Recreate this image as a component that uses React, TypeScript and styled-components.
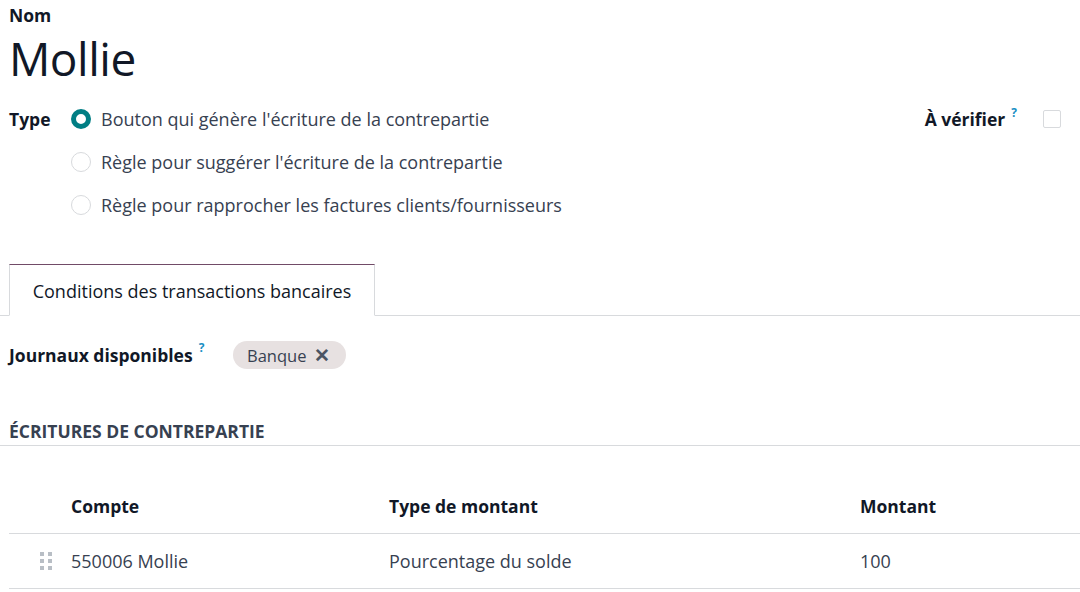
import React from "react";
import styled, { createGlobalStyle } from "styled-components";

const Global = createGlobalStyle`
  html, body { margin: 0; padding: 0; background: #fff; }
  body { font-family: "Open Sans", "Noto Sans", sans-serif; color: #374151; }
  * { box-sizing: border-box; }
`;

const Page = styled.div`
  width: 1080px;
  height: 592px;
  overflow: hidden;
  display: flex;
  flex-direction: column;
`;

const Padded = styled.div`
  padding: 0 19px 0 9px;
`;

const FieldLabel = styled.div`
  font-weight: 700;
  font-size: 17.5px;
  color: #111827;
  line-height: 22px;
  white-space: nowrap;
`;

const NameBlock = styled(Padded)`
  padding-top: 4px;
`;

const Title = styled.h1`
  margin: 2px 0 0 0;
  font-weight: 400;
  font-size: 46px;
  line-height: 60px;
  color: #111827;
  letter-spacing: -0.5px;
`;

const TypeRow = styled(Padded)`
  display: flex;
  align-items: flex-start;
  margin-top: 15px;
`;

const TypeLabel = styled(FieldLabel)`
  width: 62px;
  line-height: 32px;
`;

const RadioList = styled.div`
  display: flex;
  flex-direction: column;
  gap: 11px;
  flex: 1;
`;

const RadioItem = styled.label`
  display: flex;
  align-items: center;
  gap: 10px;
  height: 32px;
  font-size: 18px;
  color: #374151;
`;

const RadioDot = styled.span<{ $checked?: boolean }>`
  width: 20px;
  height: 20px;
  border-radius: 50%;
  flex-shrink: 0;
  border: ${(p) => (p.$checked ? "5px solid #017e84" : "1px solid #d8dadd")};
  background: #fff;
`;

const VerifyBox = styled.div`
  display: flex;
  align-items: center;
  height: 32px;
`;

const Help = styled.sup`
  color: #1a8fc4;
  font-weight: 700;
  font-size: 12px;
  margin-left: 6px;
  position: relative;
  top: -7px;
`;

const Checkbox = styled.span`
  width: 18px;
  height: 18px;
  border: 1px solid #d8dadd;
  border-radius: 2px;
  margin-left: 26px;
  background: #fff;
`;

const Tabs = styled.div`
  display: flex;
  margin-top: 43px;
  padding-left: 9px;
  border-bottom: 1px solid #d8dadd;
`;

const Tab = styled.div`
  width: 366px;
  height: 52px;
  margin-bottom: -1px;
  border: 1px solid #d8dadd;
  border-top: 1px solid #714b67;
  border-bottom: 1px solid #fff;
  background: #fff;
  display: flex;
  align-items: center;
  justify-content: center;
  font-size: 18px;
  color: #111827;
  padding-top: 2px;
`;

const JournalRow = styled(Padded)`
  display: flex;
  align-items: center;
  margin-top: 24px;
  height: 30px;
`;

const JournalLabel = styled(FieldLabel)`
  display: flex;
  align-items: center;
  width: 224px;
`;

const Tag = styled.span`
  display: inline-flex;
  align-items: center;
  gap: 8px;
  height: 28px;
  padding: 0 16px 0 14px;
  border-radius: 14px;
  background: #e7e1e1;
  color: #374151;
  font-size: 16.5px;
`;

const TagX = styled.span`
  font-size: 19px;
  font-weight: 700;
  color: #4b5563;
  line-height: 1;
`;

const SectionTitle = styled.div`
  margin-top: 49px;
  padding: 0 0 2px 9px;
  border-bottom: 1px solid #d8dadd;
  font-weight: 700;
  font-size: 17.5px;
  color: #374151;
  line-height: 24px;
`;

const Table = styled.div`
  margin: 33px 0 0 9px;
`;

const Row = styled.div<{ $head?: boolean }>`
  display: grid;
  grid-template-columns: 62px 318px 471px 1fr;
  align-items: center;
  height: 55px;
  border-bottom: 1px solid #d8dadd;
  font-size: ${(p) => (p.$head ? "17.5px" : "18px")};
  font-weight: ${(p) => (p.$head ? 700 : 400)};
  color: ${(p) => (p.$head ? "#111827" : "#374151")};
`;

const Handle = styled.span`
  display: grid;
  grid-template-columns: 4px 4px;
  gap: 3px 4px;
  margin-left: 31px;
  & > i {
    width: 4px;
    height: 4px;
    background: #b8bec5;
  }
`;

export default function App() {
  return (
    <Page>
      <Global />
      <NameBlock>
        <FieldLabel>Nom</FieldLabel>
        <Title>Mollie</Title>
      </NameBlock>
      <TypeRow>
        <TypeLabel>Type</TypeLabel>
        <RadioList>
          <RadioItem>
            <RadioDot $checked />
            Bouton qui génère l'écriture de la contrepartie
          </RadioItem>
          <RadioItem>
            <RadioDot />
            Règle pour suggérer l'écriture de la contrepartie
          </RadioItem>
          <RadioItem>
            <RadioDot />
            Règle pour rapprocher les factures clients/fournisseurs
          </RadioItem>
        </RadioList>
        <VerifyBox>
          <FieldLabel>À vérifier</FieldLabel>
          <Help>?</Help>
          <Checkbox />
        </VerifyBox>
      </TypeRow>
      <Tabs>
        <Tab>Conditions des transactions bancaires</Tab>
      </Tabs>
      <JournalRow>
        <JournalLabel>
          Journaux disponibles<Help>?</Help>
        </JournalLabel>
        <Tag>
          Banque<TagX>✕</TagX>
        </Tag>
      </JournalRow>
      <SectionTitle>ÉCRITURES DE CONTREPARTIE</SectionTitle>
      <Table>
        <Row $head>
          <span />
          <span>Compte</span>
          <span>Type de montant</span>
          <span>Montant</span>
        </Row>
        <Row>
          <Handle>
            <i /><i /><i /><i /><i /><i />
          </Handle>
          <span>550006 Mollie</span>
          <span>Pourcentage du solde</span>
          <span>100</span>
        </Row>
      </Table>
    </Page>
  );
}
